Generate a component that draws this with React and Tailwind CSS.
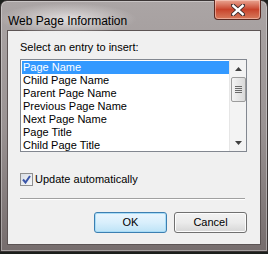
export default function App() {
  const items = [
    "Page Name",
    "Child Page Name",
    "Parent Page Name",
    "Previous Page Name",
    "Next Page Name",
    "Page Title",
    "Child Page Title",
  ];

  return (
    <div className="w-[268px] h-[254px] bg-[#1c1f1c] overflow-hidden">
      {/* window frame */}
      <div className="w-[268px] h-[252px] rounded-t-[7px] border border-[#3b3535] bg-gradient-to-b from-[#aba5a5] via-[#9a9393] to-[#766d6d] flex flex-col px-[6px] pb-[6px] shadow-[inset_0_0_0_1px_rgba(255,255,255,0.35)]">
        {/* title bar */}
        <div className="h-[29px] flex items-start shrink-0">
          <div className="relative mt-[6px] ml-[1px]">
            <div className="absolute -inset-x-[10px] -inset-y-[4px] rounded-full bg-[radial-gradient(ellipse_at_center,rgba(235,232,232,0.85),rgba(235,232,232,0)_70%)]" />
            <span className="relative text-[12px] leading-[16px] text-black font-['Liberation_Sans',sans-serif]">
              Web Page Information
            </span>
          </div>
          <div className="ml-auto -mt-px w-[47px] h-[20px] rounded-b-[4px] border border-[#5a2a22] border-t-0 bg-gradient-to-b from-[#e8a593] via-[#c8432b] to-[#d77a5c] flex items-center justify-center shadow-[inset_0_0_0_1px_rgba(255,220,210,0.5)]">
            <svg width="14" height="12" viewBox="0 0 14 12">
              <path d="M2 1.5 L12 10.5 M12 1.5 L2 10.5" stroke="#3b2a2a" strokeWidth="4.2" strokeLinecap="round" />
              <path d="M2.3 1.8 L11.7 10.2 M11.7 1.8 L2.3 10.2" stroke="#ffffff" strokeWidth="2.4" strokeLinecap="square" />
            </svg>
          </div>
        </div>

        {/* client area */}
        <div className="flex-1 border border-[#5c5454] bg-[#f0f0f0] flex flex-col pl-[12px] pr-[13px] font-['Liberation_Sans',sans-serif] text-[11px] text-black">
          <div className="mt-[10px] leading-[13px]">Select an entry to insert:</div>

          {/* list box */}
          <div className="mt-[5px] h-[93px] border border-[#828790] bg-white flex">
            <div className="flex-1 pt-px pl-px overflow-hidden">
              {items.map((t, i) => (
                <div
                  key={t}
                  className={
                    i === 0
                      ? "h-[13px] leading-[13px] pl-[1px] bg-[#3399ff] text-white whitespace-nowrap"
                      : "h-[13px] leading-[13px] pl-[1px] text-black whitespace-nowrap"
                  }
                >
                  {t}
                </div>
              ))}
            </div>
            <div className="w-[17px] bg-[#f3f3f3] border-l border-[#e6e6e6] flex flex-col items-center">
              <div className="h-[17px] flex items-center justify-center">
                <svg width="7" height="4" viewBox="0 0 7 4">
                  <path d="M0 4 L3.5 0 L7 4 Z" fill="#404040" />
                </svg>
              </div>
              <div className="w-[15px] h-[25px] rounded-[2px] border border-[#9c9c9c] bg-gradient-to-r from-[#f4f4f4] to-[#d9d9d9] flex flex-col items-center justify-center gap-[1px]">
                <div className="w-[7px] h-px bg-[#6a6a6a]" />
                <div className="w-[7px] h-px bg-[#6a6a6a]" />
                <div className="w-[7px] h-px bg-[#6a6a6a]" />
                <div className="w-[7px] h-px bg-[#6a6a6a]" />
              </div>
              <div className="mt-auto h-[17px] flex items-center justify-center">
                <svg width="7" height="4" viewBox="0 0 7 4">
                  <path d="M0 0 L7 0 L3.5 4 Z" fill="#404040" />
                </svg>
              </div>
            </div>
          </div>

          {/* checkbox */}
          <div className="mt-[21px] flex items-center h-[13px]">
            <div className="w-[13px] h-[13px] border border-[#8f8f8f] bg-gradient-to-br from-[#d8dde4] to-[#f6f7f9] flex items-center justify-center">
              <svg width="9" height="9" viewBox="0 0 9 9">
                <path d="M1 4.5 L3.5 7.5 L8 1" stroke="#3a55a8" strokeWidth="2" fill="none" />
              </svg>
            </div>
            <span className="ml-[2px] leading-[13px]">Update automatically</span>
          </div>

          {/* separator */}
          <div className="mt-[12px] h-px bg-[#a0a0a0] mr-[2px]" />
          <div className="h-px bg-white mr-[2px]" />

          {/* buttons */}
          <div className="mt-[12px] flex justify-end gap-[7px] font-['Liberation_Sans',sans-serif]">
            <button className="w-[73px] h-[21px] rounded-[3px] border border-[#3c7fb1] bg-gradient-to-b from-[#e9f5fd] via-[#d9effc] to-[#bde3f6] text-[11px] text-black shadow-[inset_0_0_0_1px_#a8dcf7]">
              OK
            </button>
            <button className="w-[73px] h-[21px] rounded-[3px] border border-[#707070] bg-gradient-to-b from-[#f2f2f2] via-[#ebebeb] to-[#d6d6d6] text-[11px] text-black shadow-[inset_0_0_0_1px_#fcfcfc]">
              Cancel
            </button>
          </div>
        </div>
      </div>
    </div>
  );
}
